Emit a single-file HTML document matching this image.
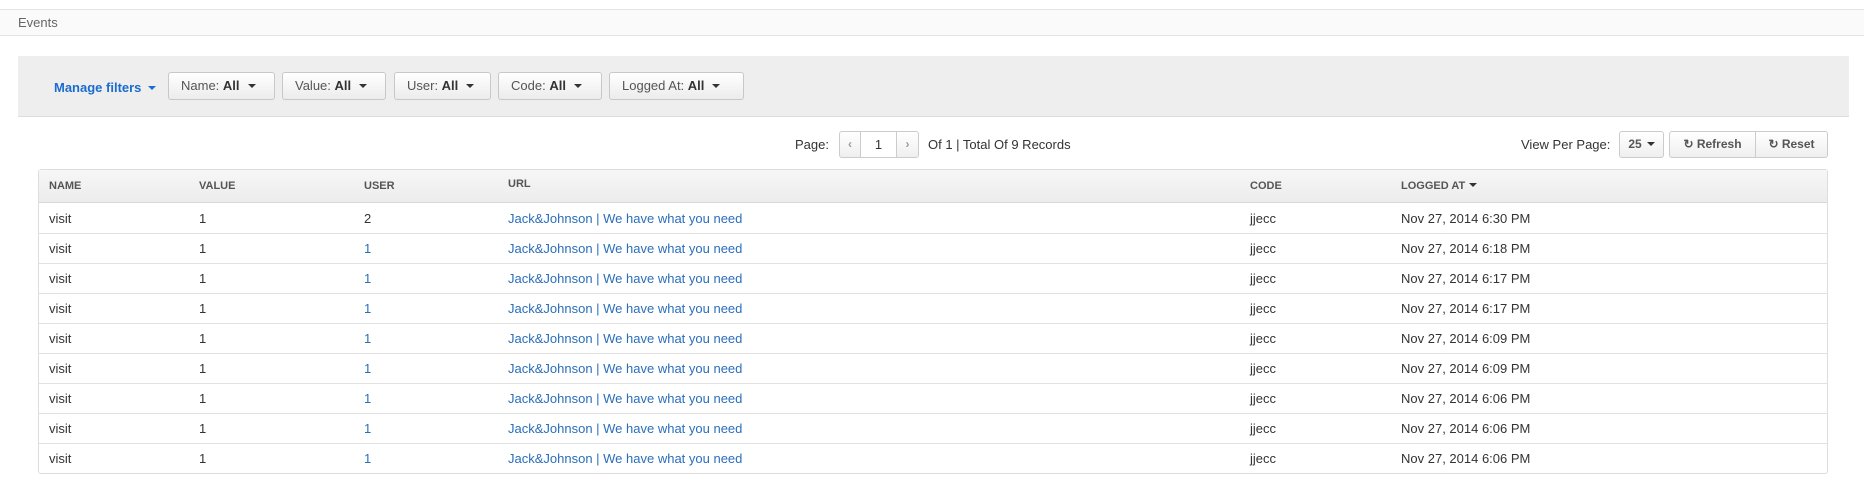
<!DOCTYPE html>
<html><head><meta charset="utf-8"><style>
*{box-sizing:border-box;margin:0;padding:0}
body{width:1864px;height:496px;background:#fff;font-family:"Liberation Sans",Arial,sans-serif;font-size:13px;color:#333;position:relative;overflow:hidden}
.a{position:absolute}
.bar{left:0;top:9px;width:1864px;height:27px;background:#fafafa;border-top:1px solid #e3e3e3;border-bottom:1px solid #e3e3e3}
.bar span{position:absolute;left:18px;top:5px;color:#666;font-size:13px}
.panel{left:18px;top:56px;width:1831px;height:61px;background:#eeeeee;border-bottom:1px solid #ddd}
.mf{left:54px;top:80px;color:#1a6ccf;font-weight:bold;font-size:13px}
.btn{position:absolute;height:28px;top:72px;border:1px solid #c8c8c8;border-radius:3px;background:linear-gradient(#fff,#ececec);color:#555;font-size:13px;line-height:26px;padding-left:12px;white-space:nowrap}
.btn b{color:#333}
.car{display:inline-block;width:0;height:0;border-left:4px solid transparent;border-right:4px solid transparent;border-top:4px solid #333;vertical-align:middle;margin-left:8px;margin-top:-2px}
.sb{position:absolute;top:131px;height:27px;border:1px solid #ccc;background:linear-gradient(#fff,#efefef);line-height:25px;color:#555;font-size:12px;font-weight:bold;text-align:center}
table{position:absolute;left:38px;top:169px;width:1790px;border-collapse:separate;border-spacing:0;border:1px solid #ddd;border-radius:3px}
th{height:33px;background:linear-gradient(#f7f7f7,#ececec);text-align:left;font-size:11px;color:#555;font-weight:bold;padding-left:10px;border-bottom:1px solid #d8d8d8}
td{height:30px;padding-left:10px;border-top:1px solid #e2e2e2;color:#333}
tr:nth-child(2) td{border-top:none}
td a{color:#2a6ebb;text-decoration:none}
</style></head><body>
<div class="a bar"><span>Events</span></div>
<div class="a panel"></div>
<div class="a mf">Manage filters <span class="car" style="border-top-color:#1a6ccf;margin-left:3px"></span></div>
<div class="btn" style="left:168px;width:107px">Name: <b>All</b><span class="car"></span></div>
<div class="btn" style="left:282px;width:104px">Value: <b>All</b><span class="car"></span></div>
<div class="btn" style="left:394px;width:97px">User: <b>All</b><span class="car"></span></div>
<div class="btn" style="left:498px;width:104px">Code: <b>All</b><span class="car"></span></div>
<div class="btn" style="left:609px;width:135px">Logged At: <b>All</b><span class="car"></span></div>

<div class="a" style="left:795px;top:137px;color:#333">Page:</div>
<div class="sb" style="left:839px;width:22px;border-radius:3px 0 0 3px;color:#999">&#8249;</div>
<div class="sb" style="left:860px;width:37px;background:#fff;font-weight:normal;font-size:13px;color:#333">1</div>
<div class="sb" style="left:896px;width:23px;border-radius:0 3px 3px 0;color:#999">&#8250;</div>
<div class="a" style="left:928px;top:137px;color:#333">Of 1 | Total Of 9 Records</div>

<div class="a" style="left:1521px;top:137px;color:#333">View Per Page:</div>
<div class="sb" style="left:1619px;width:45px;border-radius:3px">25<span class="car" style="margin-left:5px"></span></div>
<div class="sb" style="left:1669px;width:87px;border-radius:3px 0 0 3px">&#8635; Refresh</div>
<div class="sb" style="left:1755px;width:73px;border-radius:0 3px 3px 0">&#8635; Reset</div>

<table>
<tr><th style="width:150px">NAME</th><th style="width:165px">VALUE</th><th style="width:144px">USER</th><th style="width:742px;vertical-align:top;padding-top:8px">URL</th><th style="width:151px">CODE</th><th>LOGGED AT <span class="car" style="margin-left:1px;border-top-color:#333"></span></th></tr>
<tr><td>visit</td><td>1</td><td>2</td><td><a>Jack&amp;Johnson | We have what you need</a></td><td>jjecc</td><td>Nov 27, 2014 6:30 PM</td></tr>
<tr><td>visit</td><td>1</td><td><a>1</a></td><td><a>Jack&amp;Johnson | We have what you need</a></td><td>jjecc</td><td>Nov 27, 2014 6:18 PM</td></tr>
<tr><td>visit</td><td>1</td><td><a>1</a></td><td><a>Jack&amp;Johnson | We have what you need</a></td><td>jjecc</td><td>Nov 27, 2014 6:17 PM</td></tr>
<tr><td>visit</td><td>1</td><td><a>1</a></td><td><a>Jack&amp;Johnson | We have what you need</a></td><td>jjecc</td><td>Nov 27, 2014 6:17 PM</td></tr>
<tr><td>visit</td><td>1</td><td><a>1</a></td><td><a>Jack&amp;Johnson | We have what you need</a></td><td>jjecc</td><td>Nov 27, 2014 6:09 PM</td></tr>
<tr><td>visit</td><td>1</td><td><a>1</a></td><td><a>Jack&amp;Johnson | We have what you need</a></td><td>jjecc</td><td>Nov 27, 2014 6:09 PM</td></tr>
<tr><td>visit</td><td>1</td><td><a>1</a></td><td><a>Jack&amp;Johnson | We have what you need</a></td><td>jjecc</td><td>Nov 27, 2014 6:06 PM</td></tr>
<tr><td>visit</td><td>1</td><td><a>1</a></td><td><a>Jack&amp;Johnson | We have what you need</a></td><td>jjecc</td><td>Nov 27, 2014 6:06 PM</td></tr>
<tr><td>visit</td><td>1</td><td><a>1</a></td><td><a>Jack&amp;Johnson | We have what you need</a></td><td>jjecc</td><td>Nov 27, 2014 6:06 PM</td></tr>
</table>
</body></html>
